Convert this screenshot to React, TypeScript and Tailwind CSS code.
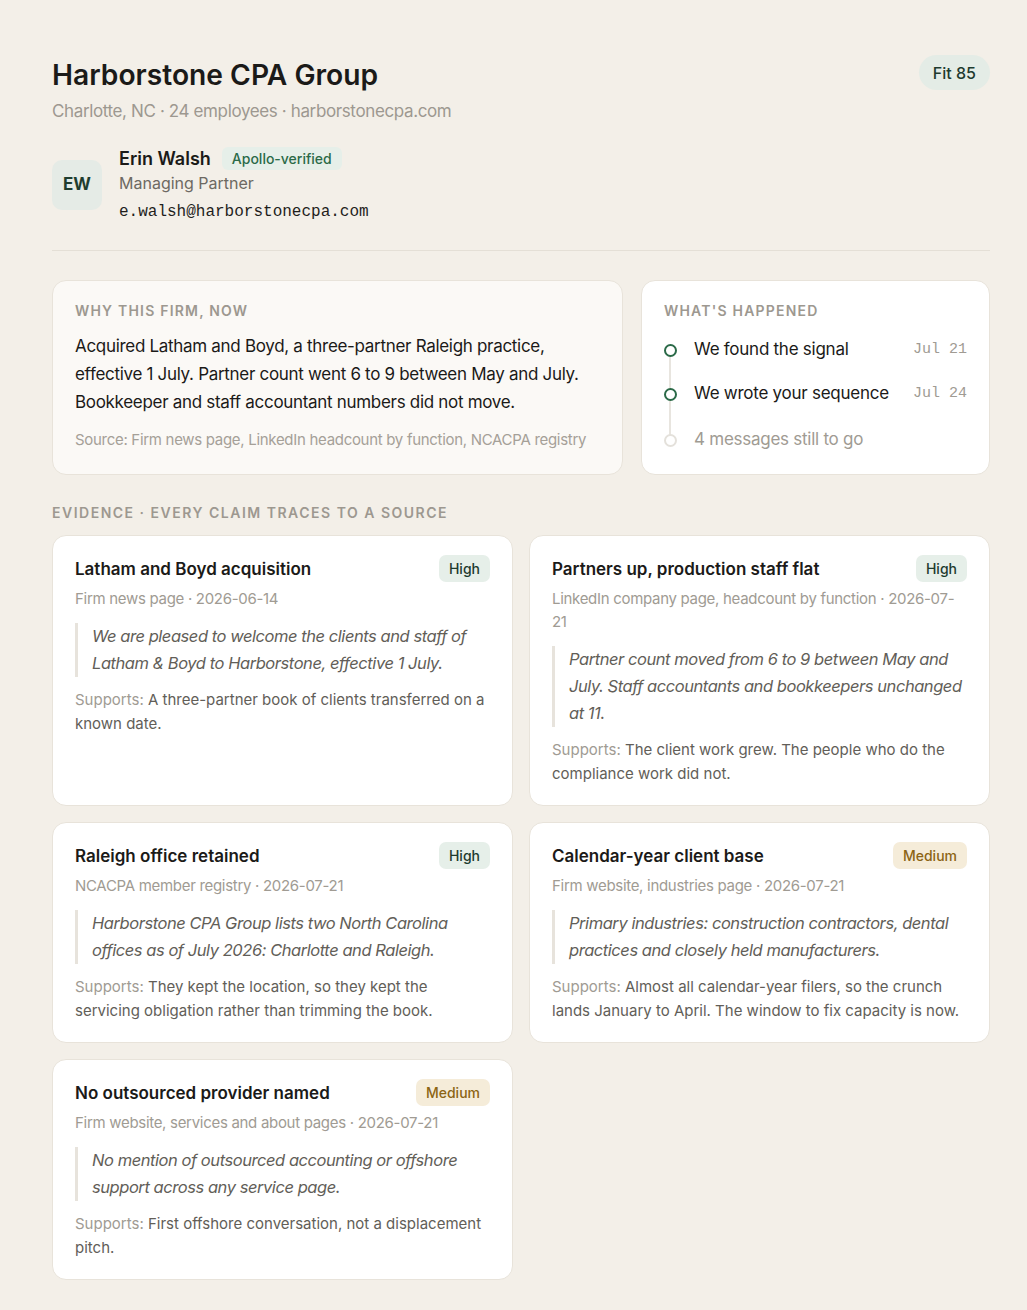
const sans = "font-['Inter','Noto_Sans',sans-serif]";
const mono = "font-['Liberation_Mono','DejaVu_Sans_Mono',monospace]";

type Evidence = {
  title: string;
  level: "High" | "Medium";
  source: string;
  quote: string;
  supports: string;
};

const evidence: Evidence[] = [
  {
    title: "Latham and Boyd acquisition",
    level: "High",
    source: "Firm news page · 2026-06-14",
    quote: "We are pleased to welcome the clients and staff of Latham & Boyd to Harborstone, effective 1 July.",
    supports: "A three-partner book of clients transferred on a known date.",
  },
  {
    title: "Partners up, production staff flat",
    level: "High",
    source: "LinkedIn company page, headcount by function · 2026-07-21",
    quote: "Partner count moved from 6 to 9 between May and July. Staff accountants and bookkeepers unchanged at 11.",
    supports: "The client work grew. The people who do the compliance work did not.",
  },
  {
    title: "Raleigh office retained",
    level: "High",
    source: "NCACPA member registry · 2026-07-21",
    quote: "Harborstone CPA Group lists two North Carolina offices as of July 2026: Charlotte and Raleigh.",
    supports: "They kept the location, so they kept the servicing obligation rather than trimming the book.",
  },
  {
    title: "Calendar-year client base",
    level: "Medium",
    source: "Firm website, industries page · 2026-07-21",
    quote: "Primary industries: construction contractors, dental practices and closely held manufacturers.",
    supports: "Almost all calendar-year filers, so the crunch lands January to April. The window to fix capacity is now.",
  },
  {
    title: "No outsourced provider named",
    level: "Medium",
    source: "Firm website, services and about pages · 2026-07-21",
    quote: "No mention of outsourced accounting or offshore support across any service page.",
    supports: "First offshore conversation, not a displacement pitch.",
  },
];

function EvidenceCard({ item }: { item: Evidence }) {
  const badge =
    item.level === "High"
      ? "bg-[#e6efe9] text-[#1e3b2f]"
      : "bg-[#f5ecd9] text-[#8c6414]";
  return (
    <div className="rounded-[14px] border border-[#e8e3da] bg-white px-[22px] pt-[19px] pb-[19px]">
      <div className="flex items-center justify-between gap-3">
        <h3 className="text-[17px] font-semibold leading-[24px] text-[#1b1a18]">{item.title}</h3>
        <span className={`rounded-[7px] px-[10px] py-[3px] text-[14px] font-medium leading-[21px] ${badge}`}>
          {item.level}
        </span>
      </div>
      <p className="mt-[5px] text-[15px] leading-[23px] tracking-[-0.02em] text-[#a09b93]">{item.source}</p>
      <blockquote className="mt-[13px] border-l-[3px] border-[#e7e3dc] pl-[14px] text-[16.5px] italic leading-[27px] tracking-[-0.027em] text-[#625e58]">
        {item.quote}
      </blockquote>
      <p className="mt-[11px] text-[15px] leading-[24px] text-[#625e58]">
        <span className="text-[#a09b93]">Supports: </span>
        <span>{item.supports}</span>
      </p>
    </div>
  );
}

function Step({ label, date, done }: { label: string; date?: string; done: boolean }) {
  return (
    <div className="relative flex h-[44px] items-center">
      <span
        className={`z-10 h-[13px] w-[13px] shrink-0 rounded-full border-[2.5px] bg-white ${
          done ? "border-[#2b6a48]" : "border-[#e4e1db]"
        }`}
      />
      <span
        className={`ml-[17px] flex-1 text-[17px] tracking-[-0.015em] ${done ? "text-[#1b1a18]" : "text-[#a09b93]"}`}
      >
        {label}
      </span>
      {date && <span className={`${mono} text-[15px] text-[#a09b93]`}>{date}</span>}
    </div>
  );
}

export default function App() {
  return (
    <div className={`${sans} min-h-[1310px] bg-[#f3efe8] pb-[34px] pl-[52px] pt-[55px] text-[#1b1a18]`}>
      <div className="w-[938px]">
        <header className="flex items-start justify-between">
          <div>
            <h1 className="mt-[2px] text-[28.2px] font-semibold leading-[36px] text-[#1b1a18]">
              Harborstone CPA Group
            </h1>
            <p className="mt-[6px] text-[17px] leading-[24px] tracking-[-0.022em] text-[#9d9890]">
              Charlotte, NC · 24 employees · harborstonecpa.com
            </p>
          </div>
          <span className="flex h-[35px] items-center rounded-full bg-[#e4ece6] px-[14px] text-[16px] font-medium text-[#1e3b2f]">
            Fit 85
          </span>
        </header>

        <div className="mt-[24px] flex items-center gap-[17px] border-b border-[#e4dfd6] pb-[27px]">
          <div className="flex h-[50px] w-[50px] items-center justify-center rounded-[10px] bg-[#e5ebe6] text-[17px] font-bold text-[#1f3d2f]">
            EW
          </div>
          <div>
            <div className="flex items-center gap-[11px]">
              <span className="text-[18px] font-semibold leading-[23px]">Erin Walsh</span>
              <span className="rounded-[6px] bg-[#e6efe9] px-[10px] py-[1px] text-[14px] font-medium leading-[21px] text-[#2b6a48]">
                Apollo-verified
              </span>
            </div>
            <p className="mt-[1px] text-[16px] leading-[24px] text-[#6d6962]">Managing Partner</p>
            <p className={`${mono} mt-[6px] text-[16px] leading-[22px] text-[#1f1e1c]`}>e.walsh@harborstonecpa.com</p>
          </div>
        </div>

        <section className="mt-[29px] grid grid-cols-[1fr_349px] gap-[18px]">
          <div className="rounded-[14px] border border-[#e8e3da] bg-[#fbf9f6] px-[22px] pb-[17px] pt-[20px]">
            <h2 className="text-[14px] font-semibold leading-[20px] tracking-[1.2px] text-[#9d9890]">WHY THIS FIRM, NOW</h2>
            <p className="mt-[11px] text-[17px] leading-[28px] tracking-[-0.018em] text-[#1b1a18]">
              Acquired Latham and Boyd, a three-partner Raleigh practice, effective 1 July. Partner count went 6 to 9
              between May and July. Bookkeeper and staff accountant numbers did not move.
            </p>
            <p className="mt-[13px] text-[15px] leading-[22px] tracking-[-0.02em] text-[#a5a098]">
              Source: Firm news page, LinkedIn headcount by function, NCACPA registry
            </p>
          </div>
          <div className="rounded-[14px] border border-[#e8e3da] bg-white px-[22px] pb-[12px] pt-[20px]">
            <h2 className="text-[14px] font-semibold leading-[20px] tracking-[1.2px] text-[#9d9890]">WHAT'S HAPPENED</h2>
            <div className="relative mt-[7px]">
              <span className="absolute bottom-[22px] left-[5px] top-[22px] w-[2px] bg-[#e8e5df]" />
              <Step label="We found the signal" date="Jul 21" done />
              <Step label="We wrote your sequence" date="Jul 24" done />
              <div className="mt-[2px]">
                <Step label="4 messages still to go" done={false} />
              </div>
            </div>
          </div>
        </section>

        <h2 className="mt-[28px] text-[14px] font-semibold leading-[20px] tracking-[1.5px] text-[#9d9890]">
          EVIDENCE · EVERY CLAIM TRACES TO A SOURCE
        </h2>

        <section className="mt-[12px] grid grid-cols-2 gap-[16px]">
          {evidence.map((e) => (
            <EvidenceCard key={e.title} item={e} />
          ))}
        </section>
      </div>
    </div>
  );
}
